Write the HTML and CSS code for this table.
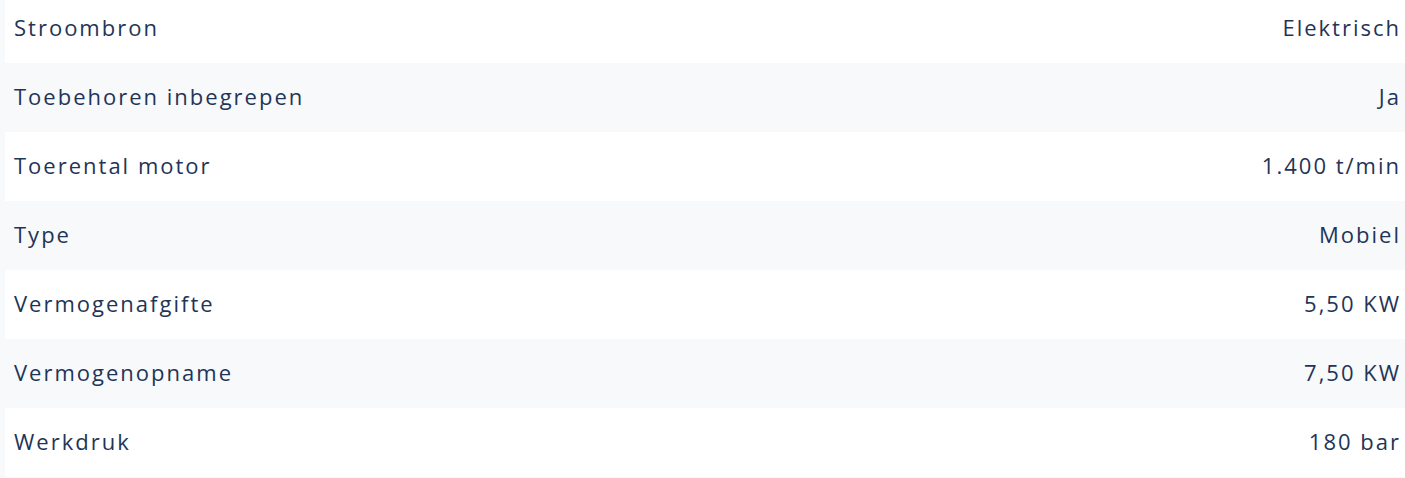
FILE: index.html
```html
<!DOCTYPE html>
<html lang="nl">
<head>
    <meta charset="UTF-8">
    <title>Specificaties</title>
    <link rel="stylesheet" href="styles.css">
</head>
<body>
    <table class="specs">
        <tbody>
            <tr><td>Stroombron</td><td>Elektrisch</td></tr>
            <tr><td>Toebehoren inbegrepen</td><td>Ja</td></tr>
            <tr><td>Toerental motor</td><td>1.400 t/min</td></tr>
            <tr><td>Type</td><td>Mobiel</td></tr>
            <tr><td>Vermogenafgifte</td><td>5,50 KW</td></tr>
            <tr><td>Vermogenopname</td><td>7,50 KW</td></tr>
            <tr><td>Werkdruk</td><td>180 bar</td></tr>
        </tbody>
    </table>
</body>
</html>
```

FILE: styles.css
```css
:root {
    --text: #1f3557;
    --stripe: #f7f9fb;
}

body {
    margin: 0;
    padding: 0 0 0 5px;
    background: var(--stripe);
    font-family: 'Open Sans', 'Noto Sans', sans-serif;
    color: var(--text);
    overflow: hidden;
}

.specs {
    width: calc(100% + 10px);
    border-collapse: collapse;
    margin-top: -6px;
}

.specs td {
    padding: 18px 14px 20px 9px;
    font-size: 22px;
    line-height: 31px;
    letter-spacing: 2px;
    vertical-align: middle;
}

.specs tr:nth-child(odd) {
    background: white;
}

.specs td:last-child {
    text-align: right;
}
```
